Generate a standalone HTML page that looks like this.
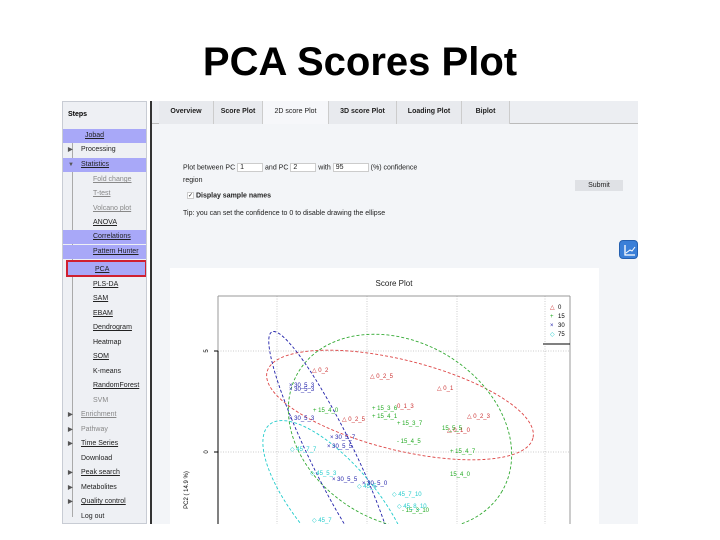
<!DOCTYPE html>
<html><head><meta charset="utf-8"><style>
*{margin:0;padding:0;box-sizing:border-box}
body{width:720px;height:540px;background:#fff;position:relative;overflow:hidden;font-family:"Liberation Sans",sans-serif}
.t{position:absolute;left:0;width:720px;top:40px;text-align:center;font-size:40px;font-weight:bold;color:#000}
.side{position:absolute;left:62px;top:101px;width:85px;height:423px;background:#eef0f4;border:1px solid #c8ccd4;overflow:hidden}
.it{position:absolute;left:0;width:84px;height:14px;font-size:7px;line-height:14px;color:#222}
.hl{background:#a8a8f8}
.it span{position:absolute;left:22px}
.u{text-decoration:underline}
.g{color:#888}
.ar{position:absolute;left:5px;font-size:6px;color:#555}
.main{position:absolute;left:150px;top:101px;width:488px;height:423px;background:#f3f5f8;border-left:2px solid #333;overflow:hidden}
.tabs{position:absolute;left:0;top:0;width:488px;height:23px;background:#eceef2;border-bottom:1px solid #bbb}
.tab{position:absolute;top:0;height:23px;border-right:1px solid #ccc;font-size:7px;font-weight:bold;text-align:center;line-height:22px;color:#222;background:#e8eaee}
.f{position:absolute;font-size:7px;color:#222}
.in{display:inline-block;background:#fff;border:1px solid #ccc;height:9px;vertical-align:middle;font-size:7px;line-height:8px;padding-left:2px}
</style></head><body>
<div class="t">PCA Scores Plot</div>
<div class="side">
<div style="position:absolute;left:5px;top:9px;font-size:7px;font-weight:bold">Steps</div>
<div style="position:absolute;left:9px;top:35px;width:1px;height:380px;background:#aaa"></div>
<div class="it hl" style="top:27px"><span class="u">Jobad</span></div>
<div class="it" style="top:41px"><b class="ar">▶</b><span style="left:18px">Processing</span></div>
<div class="it hl" style="top:56px"><b class="ar">▼</b><span class="u" style="left:18px">Statistics</span></div>
<div class="it g" style="top:71px"><span class="u" style="left:30px">Fold change</span></div>
<div class="it g" style="top:85px"><span class="u" style="left:30px">T-test</span></div>
<div class="it g" style="top:100px"><span class="u" style="left:30px">Volcano plot</span></div>
<div class="it" style="top:114px"><span class="u" style="left:30px">ANOVA</span></div>
<div class="it hl" style="top:128px"><span class="u" style="left:30px">Correlations</span></div>
<div class="it hl" style="top:143px"><span class="u" style="left:30px">Pattern Hunter</span></div>
<div class="it hl" style="top:158px;left:3px;width:81px;height:17px;border:2px solid #d02030"><span class="u" style="left:27px;top:1px;line-height:13px">PCA</span></div>
<div class="it" style="top:176px"><span class="u" style="left:30px">PLS-DA</span></div>
<div class="it" style="top:190px"><span class="u" style="left:30px">SAM</span></div>
<div class="it" style="top:205px"><span class="u" style="left:30px">EBAM</span></div>
<div class="it" style="top:219px"><span class="u" style="left:30px">Dendrogram</span></div>
<div class="it" style="top:234px"><span style="left:30px">Heatmap</span></div>
<div class="it" style="top:248px"><span class="u" style="left:30px">SOM</span></div>
<div class="it" style="top:263px"><span style="left:30px">K-means</span></div>
<div class="it" style="top:277px"><span class="u" style="left:30px">RandomForest</span></div>
<div class="it g" style="top:292px"><span style="left:30px">SVM</span></div>
<div class="it g" style="top:306px"><b class="ar">▶</b><span class="u" style="left:18px">Enrichment</span></div>
<div class="it g" style="top:321px"><b class="ar">▶</b><span style="left:18px">Pathway</span></div>
<div class="it" style="top:335px"><b class="ar">▶</b><span class="u" style="left:18px">Time Series</span></div>
<div class="it" style="top:350px"><span style="left:18px">Download</span></div>
<div class="it" style="top:364px"><b class="ar">▶</b><span class="u" style="left:18px">Peak search</span></div>
<div class="it" style="top:379px"><b class="ar">▶</b><span style="left:18px">Metabolites</span></div>
<div class="it" style="top:393px"><b class="ar">▶</b><span class="u" style="left:18px">Quality control</span></div>
<div class="it" style="top:408px"><span style="left:18px">Log out</span></div>
</div>
<div class="main">
<div class="tabs">
<div class="tab" style="left:7px;width:55px">Overview</div>
<div class="tab" style="left:62px;width:49px">Score Plot</div>
<div class="tab" style="left:111px;width:66px;background:#f6f7fa;font-weight:normal">2D score Plot</div>
<div class="tab" style="left:177px;width:68px">3D score Plot</div>
<div class="tab" style="left:245px;width:65px">Loading Plot</div>
<div class="tab" style="left:310px;width:48px">Biplot</div>
</div>
<div class="f" style="left:31px;top:62px">Plot between PC <span class="in" style="width:26px">1</span> and PC <span class="in" style="width:26px">2</span> with <span class="in" style="width:36px">95</span> (%) confidence</div>
<div class="f" style="left:31px;top:76px">region</div>
<div class="f" style="left:35px;top:91px"><span class="in" style="width:7px;height:7px;padding:0;font-size:6px;line-height:6px">✓</span> <b>Display sample names</b></div>
<div class="f" style="left:31px;top:109px">Tip: you can set the confidence to 0 to disable drawing the ellipse</div>
<div class="f" style="left:423px;top:79px;width:48px;height:11px;background:#dfe1e5;text-align:center;line-height:11px">Submit</div>
<div style="position:absolute;left:467px;top:139px;width:19px;height:19px;border-radius:4px;background:#3a7fd8;border:1px solid #2560b0"><svg width="19" height="19"><path d="M5 4V14H15" stroke="#fff" fill="none" stroke-width="1.3"/><path d="M6 12L10 9L12 10L15 6" stroke="#fff" fill="none"/></svg></div>
<div style="position:absolute;left:18px;top:167px;width:429px;height:256px;background:#fff;overflow:hidden">
<svg width="429" height="256" viewBox="168 268 429 256" font-family="Liberation Sans" font-size="6">
<text x="392" y="286" font-size="8" text-anchor="middle" fill="#222">Score Plot</text>
<g stroke="#ccc" stroke-dasharray="1,1.5"><line x1="275" y1="296" x2="275" y2="524"/><line x1="365" y1="296" x2="365" y2="524"/><line x1="455" y1="296" x2="455" y2="524"/><line x1="543" y1="296" x2="543" y2="524"/><line x1="216" y1="351" x2="568" y2="351"/><line x1="216" y1="452" x2="568" y2="452"/></g>
<path d="M216 296V524M568 296V524M216 296H568" stroke="#999" fill="none"/>
<line x1="216" y1="351" x2="216" y2="524" stroke="#000"/>
<line x1="212" y1="351" x2="216" y2="351" stroke="#000"/><line x1="212" y1="452" x2="216" y2="452" stroke="#000"/>
<text transform="translate(206,351) rotate(-90)" text-anchor="middle">5</text>
<text transform="translate(206,452) rotate(-90)" text-anchor="middle">0</text>
<text transform="translate(186,490) rotate(-90)" text-anchor="middle">PC2 ( 14.9 %)</text>
<line x1="541" y1="344" x2="568" y2="344" stroke="#000"/>
<text x="548" y="309" fill="#c33">△</text><text x="556" y="309">0</text>
<text x="548" y="318" fill="#2a2">+</text><text x="556" y="318">15</text>
<text x="548" y="327" fill="#22a">×</text><text x="556" y="327">30</text>
<text x="548" y="336" fill="#2cc">◇</text><text x="556" y="336">75</text>
<g fill="none" stroke-dasharray="3,2" stroke-width="0.9">
<ellipse cx="398" cy="405" rx="137" ry="45" transform="rotate(14 398 405)" stroke="#d44"/>
<ellipse cx="398" cy="432" rx="118" ry="90" transform="rotate(30 398 432)" stroke="#3a3"/>
<ellipse cx="330" cy="455" rx="137" ry="22" transform="rotate(64 330 455)" stroke="#22a"/>
<ellipse cx="335" cy="505" rx="105" ry="40" transform="rotate(50 335 505)" stroke="#2cc"/>
</g>
<g fill="#c33"><text x="310" y="372">△ 0_2</text><text x="368" y="378">△ 0_2_5</text><text x="435" y="390">△ 0_1</text><text x="465" y="418">△ 0_2_3</text><text x="445" y="432">△ 0_1_0</text><text x="340" y="421">△ 0_2_5</text><text x="395" y="408">0_1_3</text></g>
<g fill="#2a2"><text x="311" y="412">+ 15_4_0</text><text x="370" y="410">+ 15_3_6</text><text x="370" y="418">+ 15_4_1</text><text x="395" y="425">+ 15_3_7</text><text x="395" y="443">- 15_4_5</text><text x="448" y="453">+ 15_4_7</text><text x="448" y="476">15_4_0</text><text x="400" y="512">- 15_3_10</text><text x="440" y="430">15_5_5</text></g>
<g fill="#22a"><text x="287" y="391">× 30_5_3</text><text x="287" y="387">× 30_5_3</text><text x="287" y="420">× 30_5_3</text><text x="328" y="439">× 30_5_7</text><text x="325" y="448">× 30_5_5</text><text x="330" y="481">× 30_5_5</text><text x="360" y="485">× 30_5_0</text></g>
<g fill="#2cc"><text x="288" y="451">◇ 45_7_7</text><text x="308" y="475">◇ 45_5_3</text><text x="355" y="488">◇ 45_5</text><text x="390" y="496">◇ 45_7_10</text><text x="395" y="508">◇ 45_8_10</text><text x="310" y="522">◇ 45_7</text></g>
</svg></div>
</div>
</body></html>
